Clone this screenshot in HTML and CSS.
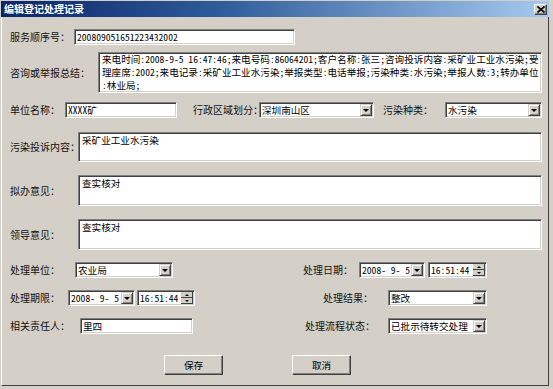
FILE: index.html
```html
<!DOCTYPE html>
<html lang="zh-CN">
<head>
<meta charset="utf-8">
<title>编辑登记处理记录</title>
<link rel="stylesheet" href="styles.css">
</head>
<body>
<div class="window">
  <div class="titlebar">
    <span class="title">编辑登记处理记录</span>
    <span class="close"><svg width="8" height="7" viewBox="0 0 8 7"><path d="M0.5 0.5 L7.5 6.5 M7.5 0.5 L0.5 6.5" stroke="#000" stroke-width="1.6" fill="none"/></svg></span>
  </div>
  <div class="content">
    <div class="row r1">
      <span class="lbl" style="width:64px">服务顺序号：</span>
      <div class="field" style="width:221px">200809051651223432002</div>
    </div>
    <div class="row r2">
      <span class="lbl" style="width:88px">咨询或举报总结：</span>
      <div class="area summary" style="width:444px">
        <div class="ln">来电时间:2008-9-5 16:47:46;来电号码:86064201;客户名称:张三;咨询投诉内容:采矿业工业水污染;受</div>
        <div class="ln">理座席:2002;来电记录:采矿业工业水污染;举报类型:电话举报;污染种类:水污染;举报人数:3;转办单位</div>
        <div class="ln">:林业局;</div>
      </div>
    </div>
    <div class="row r3">
      <span class="lbl" style="width:55px">单位名称：</span>
      <div class="field" style="width:112px">XXXX矿</div>
      <span class="lbl ml" style="width:66px;margin-left:16px">行政区域划分：</span>
      <div class="field select" style="width:115px"><span class="val">深圳南山区</span><span class="dd"><i class="down"></i></span></div>
      <span class="lbl" style="width:62px;margin-left:9px">污染种类：</span>
      <div class="field select" style="width:97px"><span class="val">水污染</span><span class="dd"><i class="down"></i></span></div>
    </div>
    <div class="row r4">
      <span class="lbl" style="width:68px">污染投诉内容：</span>
      <div class="area" style="width:464px"><div class="ln">采矿业工业水污染</div></div>
    </div>
    <div class="row r5">
      <span class="lbl" style="width:68px">拟办意见：</span>
      <div class="area" style="width:464px"><div class="ln">查实核对</div></div>
    </div>
    <div class="row r6">
      <span class="lbl" style="width:68px">领导意见：</span>
      <div class="area" style="width:464px"><div class="ln">查实核对</div></div>
    </div>
    <div class="row r7">
      <span class="lbl" style="width:65px">处理单位：</span>
      <div class="field select" style="width:98px"><span class="val">农业局</span><span class="dd"><i class="down"></i></span></div>
      <span class="lbl" style="width:56px;margin-left:130px">处理日期：</span>
      <div class="field select" style="width:66px"><span class="val">2008- 9- 5</span><span class="dd"><i class="down"></i></span></div>
      <div class="field select" style="width:59px;margin-left:3px"><span class="val">16:51:44</span><span class="spin"><span class="sb"><i class="up"></i></span><span class="sb"><i class="dn"></i></span></span></div>
    </div>
    <div class="row r8">
      <span class="lbl" style="width:58px">处理期限：</span>
      <div class="field select" style="width:67px"><span class="val">2008- 9- 5</span><span class="dd"><i class="down"></i></span></div>
      <div class="field select" style="width:58px;margin-left:2px"><span class="val">16:51:44</span><span class="spin"><span class="sb"><i class="up"></i></span><span class="sb"><i class="dn"></i></span></span></div>
      <span class="lbl" style="width:65px;margin-left:128px">处理结果：</span>
      <div class="field select" style="width:99px"><span class="val">整改</span><span class="dd"><i class="down"></i></span></div>
    </div>
    <div class="row r9">
      <span class="lbl" style="width:70px">相关责任人：</span>
      <div class="field" style="width:113px">里四</div>
      <span class="lbl" style="width:83px;margin-left:112px">处理流程状态：</span>
      <div class="field select" style="width:99px"><span class="val">已批示待转交处理</span><span class="dd"><i class="down"></i></span></div>
    </div>
    <div class="row buttons">
      <button class="btn" style="margin-left:154px">保存</button>
      <button class="btn" style="margin-left:69px">取消</button>
    </div>
  </div>
</div>
</body>
</html>
```

FILE: styles.css
```css
* { box-sizing: border-box; }
html, body { margin: 0; padding: 0; }
body {
  width: 553px;
  height: 389px;
  overflow: hidden;
  background: #d4d0c8;
  font-family: "Noto Sans Mono CJK SC", "Noto Sans CJK SC", "DejaVu Sans", sans-serif;
  font-size: 9.6px;
  color: #000;
}
.window {
  width: 553px;
  height: 389px;
  display: flex;
  flex-direction: column;
  background: #d4d0c8;
  padding: 1px 4px 3px 1px;
}
.titlebar {
  height: 16px;
  flex: none;
  display: flex;
  align-items: center;
  justify-content: space-between;
  padding: 0 2px 0 3px;
  background: linear-gradient(to right, #0a246a 0%, #2f5c9a 40%, #a6caf0 100%);
}
.title {
  color: #fff;
  font-family: "Noto Sans CJK SC", sans-serif;
  font-weight: bold;
  font-size: 10px;
  line-height: 12px;
}
.close {
  width: 13px;
  height: 11px;
  display: flex;
  align-items: center;
  justify-content: center;
  background: #d4d0c8;
  border: 1px solid;
  border-color: #fff #404040 #404040 #fff;
  box-shadow: inset -1px -1px #808080;
}
.content {
  flex: 1;
  border-left: 1px solid #fff;
  border-right: 1px solid #404040;
  border-bottom: 1px solid #404040;
  padding-left: 8px;
  display: flex;
  flex-direction: column;
}
.row {
  display: flex;
  align-items: center;
  flex: none;
}
.r1 { margin-top: 12px; height: 16px; }
.r2 { margin-top: 7px; height: 41px; }
.r3 { margin-top: 9px; height: 16px; }
.r4 { margin-top: 14px; height: 30px; }
.r5 { margin-top: 13px; height: 31px; }
.r6 { margin-top: 13px; height: 31px; }
.r7 { margin-top: 12px; height: 16px; }
.r8 { margin-top: 12px; height: 16px; }
.r9 { margin-top: 12px; height: 16px; }
.buttons { margin-top: 21px; height: 20px; }

.lbl {
  flex: none;
  white-space: nowrap;
  font-family: "Noto Sans CJK SC", sans-serif;
  font-size: 10px;
  line-height: 12px;
  color: #111;
}
.field, .area {
  flex: none;
  background: #fff;
  border: 1px solid;
  border-color: #808080 #fff #fff #808080;
  box-shadow: inset 1px 1px #404040, inset -1px -1px #d4d0c8;
  white-space: nowrap;
  overflow: hidden;
}
.field {
  height: 16px;
  padding: 1px 1px 1px 2px;
  line-height: 12px;
  display: flex;
  align-items: center;
}
.area {
  height: 100%;
  padding: 1px 2px 0 3px;
  line-height: 12px;
}
.area.summary {
  padding-top: 0;
  line-height: 13px;
}
.ln { white-space: nowrap; }
.select .val { flex: 1; overflow: hidden; }
.dd, .spin {
  flex: none;
  width: 12px;
  height: 12px;
  display: flex;
  align-items: center;
  justify-content: center;
}
.dd, .sb {
  background: #d4d0c8;
  border: 1px solid;
  border-color: #d4d0c8 #404040 #404040 #d4d0c8;
  box-shadow: inset 1px 1px #fff, inset -1px -1px #808080;
}
.spin {
  flex-direction: column;
}
.sb {
  width: 12px;
  height: 6px;
  display: flex;
  align-items: center;
  justify-content: center;
  border-width: 0 1px 1px 0;
  box-shadow: none;
}
.down {
  display: block;
  width: 0;
  height: 0;
  border-left: 3px solid transparent;
  border-right: 3px solid transparent;
  border-top: 3px solid #000;
}
.up {
  display: block;
  width: 0;
  height: 0;
  border-left: 2px solid transparent;
  border-right: 2px solid transparent;
  border-bottom: 2px solid #000;
}
.dn {
  display: block;
  width: 0;
  height: 0;
  border-left: 2px solid transparent;
  border-right: 2px solid transparent;
  border-top: 2px solid #000;
}
.btn {
  flex: none;
  width: 59px;
  height: 20px;
  padding: 0;
  margin: 0;
  background: #d4d0c8;
  border: 1px solid;
  border-color: #fff #404040 #404040 #fff;
  box-shadow: inset -1px -1px #808080;
  font-family: "Noto Sans CJK SC", sans-serif;
  font-size: 9.6px;
  line-height: 12px;
  color: #000;
}
```
